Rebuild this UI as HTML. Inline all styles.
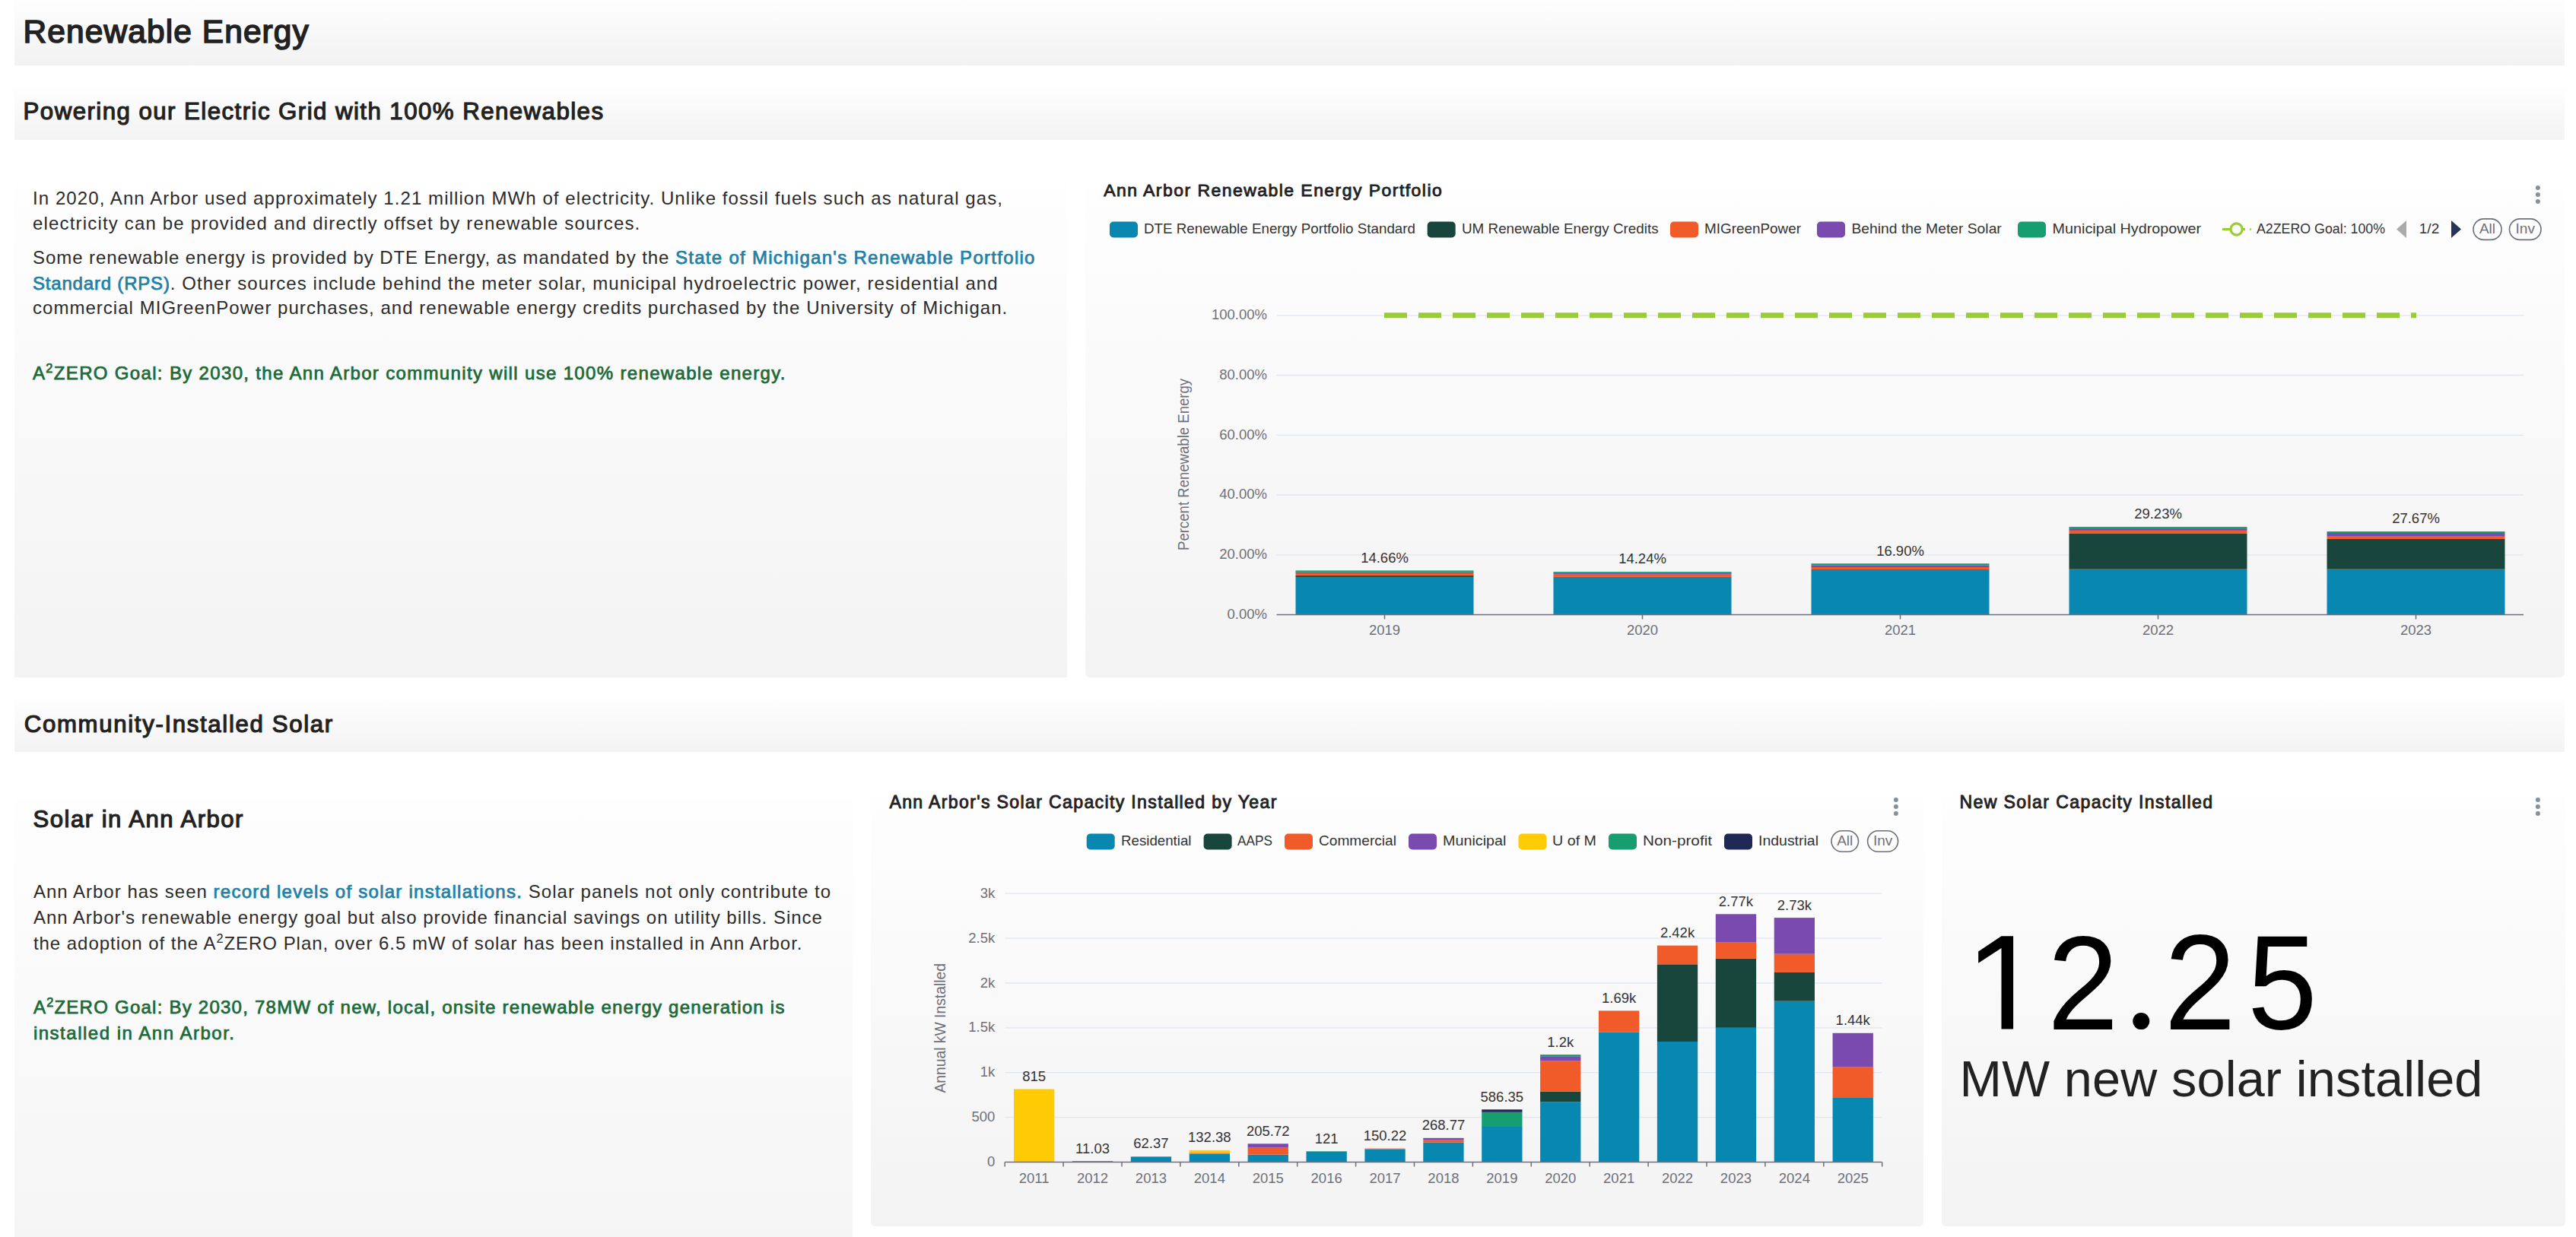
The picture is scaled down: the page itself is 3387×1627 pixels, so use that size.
<!DOCTYPE html><html><head><meta charset="utf-8"><style>
html,body{margin:0;padding:0;}
body{width:3387px;height:1627px;overflow:hidden;position:relative;background:#fff;font-family:"Liberation Sans", sans-serif;}
.t{position:absolute;white-space:nowrap;line-height:1;}
.p{position:absolute;}
svg{position:absolute;left:0;top:0;}
sup{font-size:0.68em;vertical-align:0;position:relative;top:-0.55em;line-height:0;}
</style></head><body>
<div class="p" style="left:19px;top:0px;width:3353px;height:86px;background:linear-gradient(to bottom,#fefefe,#f2f2f2 100%);border-radius:0px"></div>
<div class="p" style="left:19px;top:114px;width:3353px;height:70px;background:linear-gradient(to bottom,#fefefe,#f3f3f3 100%);border-radius:0px"></div>
<div class="p" style="left:19px;top:243px;width:1384px;height:648px;background:linear-gradient(to bottom,#fefefe,#f3f3f3 100%);border-radius:0px"></div>
<div class="p" style="left:1427px;top:243px;width:1945px;height:648px;background:linear-gradient(to bottom,#fefefe,#f3f3f3 100%);border-radius:6px"></div>
<div class="p" style="left:19px;top:919px;width:3353px;height:70px;background:linear-gradient(to bottom,#fefefe,#f3f3f3 100%);border-radius:0px"></div>
<div class="p" style="left:19px;top:1050px;width:1102px;height:650px;background:linear-gradient(to bottom,#fefefe,#f4f4f4 100%);border-radius:0px"></div>
<div class="p" style="left:1145px;top:1043px;width:1384px;height:570px;background:linear-gradient(to bottom,#fefefe,#f3f3f3 100%);border-radius:6px"></div>
<div class="p" style="left:2553px;top:1043px;width:820px;height:570px;background:linear-gradient(to bottom,#fefefe,#f3f3f3 100%);border-radius:6px"></div>
<div class="t" style="left:30.6px;top:20.8px;font-size:42.44px;font-weight:400;color:#222;letter-spacing:1.107px;-webkit-text-stroke:1.61px #222;">Renewable Energy</div>
<div class="t" style="left:30.6px;top:131.2px;font-size:31.25px;font-weight:400;color:#222;letter-spacing:1.433px;-webkit-text-stroke:1.19px #222;">Powering our Electric Grid with 100% Renewables</div>
<div class="t" style="left:31.8px;top:937.4px;font-size:31.18px;font-weight:400;color:#222;letter-spacing:1.662px;-webkit-text-stroke:1.18px #222;">Community-Installed Solar</div>
<div class="t" style="left:43.0px;top:248.8px;font-size:24px;font-weight:400;color:#2b2b2b;letter-spacing:1.08px;">In 2020, Ann Arbor used approximately 1.21 million MWh of electricity. Unlike fossil fuels such as natural gas,</div>
<div class="t" style="left:43.0px;top:281.7px;font-size:24px;font-weight:400;color:#2b2b2b;letter-spacing:1.171px;">electricity can be provided and directly offset by renewable sources.</div>
<div class="t" style="left:43.0px;top:327.4px;font-size:24px;font-weight:400;color:#2b2b2b;letter-spacing:0.936px;">Some renewable energy is provided by DTE Energy, as mandated by the <b style="font-weight:400;-webkit-text-stroke:0.75px #1f80a8;color:#1f80a8;letter-spacing:1.290px">State of Michigan's Renewable Portfolio</b></div>
<div class="t" style="left:43.0px;top:360.8px;font-size:24px;font-weight:400;color:#2b2b2b;letter-spacing:1.068px;"><b style="font-weight:400;-webkit-text-stroke:0.75px #1f80a8;color:#1f80a8;letter-spacing:0.807px">Standard (RPS)</b>. Other sources include behind the meter solar, municipal hydroelectric power, residential and</div>
<div class="t" style="left:43.0px;top:393.4px;font-size:24px;font-weight:400;color:#2b2b2b;letter-spacing:1.029px;">commercial MIGreenPower purchases, and renewable energy credits purchased by the University of Michigan.</div>
<div class="t" style="left:43.0px;top:478.9px;font-size:24px;font-weight:400;color:#1c6a3a;letter-spacing:1.339px;-webkit-text-stroke:0.75px #1c6a3a;">A<sup>2</sup>ZERO Goal: By 2030, the Ann Arbor community will use 100% renewable energy.</div>
<div class="t" style="left:43.6px;top:1062.3px;font-size:31.1px;font-weight:400;color:#222;letter-spacing:1.482px;-webkit-text-stroke:1.18px #222;">Solar in Ann Arbor</div>
<div class="t" style="left:43.9px;top:1160.9px;font-size:24px;font-weight:400;color:#2b2b2b;letter-spacing:1.01px;">Ann Arbor has seen <b style="font-weight:400;-webkit-text-stroke:0.75px #1f80a8;color:#1f80a8;letter-spacing:1.254px">record levels of solar installations.</b> Solar panels not only contribute to</div>
<div class="t" style="left:43.9px;top:1195.0px;font-size:24px;font-weight:400;color:#2b2b2b;letter-spacing:0.98px;">Ann Arbor's renewable energy goal but also provide financial savings on utility bills. Since</div>
<div class="t" style="left:43.9px;top:1228.8px;font-size:24px;font-weight:400;color:#2b2b2b;letter-spacing:0.968px;">the adoption of the A<sup>2</sup>ZERO Plan, over 6.5 mW of solar has been installed in Ann Arbor.</div>
<div class="t" style="left:43.9px;top:1312.5px;font-size:24px;font-weight:400;color:#1c6a3a;letter-spacing:1.239px;-webkit-text-stroke:0.75px #1c6a3a;">A<sup>2</sup>ZERO Goal: By 2030, 78MW of new, local, onsite renewable energy generation is</div>
<div class="t" style="left:43.9px;top:1346.5px;font-size:24px;font-weight:400;color:#1c6a3a;letter-spacing:1.512px;-webkit-text-stroke:0.75px #1c6a3a;">installed in Ann Arbor.</div>
<div class="t" style="left:1451.2px;top:239.3px;font-size:22.97px;font-weight:400;color:#222;letter-spacing:1.466px;-webkit-text-stroke:0.87px #222;">Ann Arbor Renewable Energy Portfolio</div>
<div class="t" style="left:1169.4px;top:1044.1px;font-size:23.11px;font-weight:400;color:#222;letter-spacing:1.337px;-webkit-text-stroke:0.88px #222;">Ann Arbor&#39;s Solar Capacity Installed by Year</div>
<div class="t" style="left:2576.4px;top:1044.4px;font-size:23.11px;font-weight:400;color:#222;letter-spacing:1.378px;-webkit-text-stroke:0.88px #222;">New Solar Capacity Installed</div>
<div class="t" style="left:2576.5px;top:1386.4px;font-size:66.6px;font-weight:400;color:#222;letter-spacing:0.152px;">MW new solar installed</div>
<svg width="3387" height="1627" viewBox="0 0 3387 1627" font-family='"Liberation Sans", sans-serif'>
<circle cx="3336.9" cy="246.9" r="3.0" fill="#84919a"/>
<circle cx="3336.9" cy="255.9" r="3.0" fill="#84919a"/>
<circle cx="3336.9" cy="264.9" r="3.0" fill="#84919a"/>
<rect x="1459" y="291.5" width="37" height="21" rx="5" fill="#0888b0"/>
<text x="1504" y="307.1" font-size="19" fill="#333" textLength="357" lengthAdjust="spacingAndGlyphs">DTE Renewable Energy Portfolio Standard</text>
<rect x="1876.7" y="291.5" width="37" height="21" rx="5" fill="#19463c"/>
<text x="1922" y="307.1" font-size="19" fill="#333" textLength="258.6" lengthAdjust="spacingAndGlyphs">UM Renewable Energy Credits</text>
<rect x="2196" y="291.5" width="37" height="21" rx="5" fill="#f15a29"/>
<text x="2241" y="307.1" font-size="19" fill="#333" textLength="127" lengthAdjust="spacingAndGlyphs">MIGreenPower</text>
<rect x="2389" y="291.5" width="37" height="21" rx="5" fill="#7a4aae"/>
<text x="2434.5" y="307.1" font-size="19" fill="#333" textLength="197.3" lengthAdjust="spacingAndGlyphs">Behind the Meter Solar</text>
<rect x="2653" y="291.5" width="37" height="21" rx="5" fill="#179e70"/>
<text x="2698.6" y="307.1" font-size="19" fill="#333" textLength="195.4" lengthAdjust="spacingAndGlyphs">Municipal Hydropower</text>
<line x1="2922" y1="301.5" x2="2952" y2="301.5" stroke="#9acd32" stroke-width="3"/>
<circle cx="2940.6" cy="301.5" r="7.6" fill="#fafafa" stroke="#9acd32" stroke-width="3.2"/>
<circle cx="2959" cy="301.5" r="1.2" fill="#9acd32"/>
<text x="2967" y="307.1" font-size="19" fill="#333" textLength="169" lengthAdjust="spacingAndGlyphs">A2ZERO Goal: 100%</text>
<path d="M3164 290 L3151 301.5 L3164 313 Z" fill="#aaa"/>
<text x="3194.00" y="307.10" font-size="19" fill="#333" text-anchor="middle" >1/2</text>
<path d="M3223 290 L3236 301.5 L3223 313 Z" fill="#26345a"/>
<rect x="3252" y="287.9" width="37" height="27.5" rx="13.75" fill="none" stroke="#6e7079" stroke-width="1.6"/>
<text x="3270.50" y="307.20" font-size="19" fill="#6e7079" text-anchor="middle" >All</text>
<rect x="3299.5" y="287.9" width="41.5" height="27.5" rx="13.75" fill="none" stroke="#6e7079" stroke-width="1.6"/>
<text x="3320.25" y="307.20" font-size="19" fill="#6e7079" text-anchor="middle" >Inv</text>
<line x1="1678.5" y1="729.8" x2="3318" y2="729.8" stroke="#e0e6f1" stroke-width="1.3"/>
<line x1="1678.5" y1="651.0" x2="3318" y2="651.0" stroke="#e0e6f1" stroke-width="1.3"/>
<line x1="1678.5" y1="572.3" x2="3318" y2="572.3" stroke="#e0e6f1" stroke-width="1.3"/>
<line x1="1678.5" y1="493.5" x2="3318" y2="493.5" stroke="#e0e6f1" stroke-width="1.3"/>
<line x1="1678.5" y1="414.8" x2="3318" y2="414.8" stroke="#e0e6f1" stroke-width="1.3"/>
<text x="1666.00" y="813.90" font-size="18.5" fill="#6e7079" text-anchor="end" >0.00%</text>
<text x="1666.00" y="735.16" font-size="18.5" fill="#6e7079" text-anchor="end" >20.00%</text>
<text x="1666.00" y="656.42" font-size="18.5" fill="#6e7079" text-anchor="end" >40.00%</text>
<text x="1666.00" y="577.68" font-size="18.5" fill="#6e7079" text-anchor="end" >60.00%</text>
<text x="1666.00" y="498.94" font-size="18.5" fill="#6e7079" text-anchor="end" >80.00%</text>
<text x="1666.00" y="420.20" font-size="18.5" fill="#6e7079" text-anchor="end" >100.00%</text>
<text x="1563.2" y="610.9" font-size="19.5" fill="#6e7079" text-anchor="middle" textLength="226" lengthAdjust="spacingAndGlyphs" transform="rotate(-90 1563.2 610.9)">Percent Renewable Energy</text>
<line x1="1820" y1="414.7" x2="3177" y2="414.7" stroke="#9acd32" stroke-width="7" stroke-dasharray="30 15"/>
<rect x="1703.50" y="758.90" width="234.00" height="49.60" fill="#0888b0"/>
<rect x="1703.50" y="756.80" width="234.00" height="2.10" fill="#19463c"/>
<rect x="1703.50" y="754.00" width="234.00" height="2.80" fill="#f15a29"/>
<rect x="1703.50" y="752.50" width="234.00" height="1.50" fill="#7a4aae"/>
<rect x="1703.50" y="750.40" width="234.00" height="2.10" fill="#179e70"/>
<text x="1820.50" y="739.80" font-size="18.5" fill="#333" text-anchor="middle" >14.66%</text>
<line x1="1820.5" y1="808.5" x2="1820.5" y2="814.5" stroke="#6e7079" stroke-width="1.5"/>
<text x="1820.50" y="834.50" font-size="18.5" fill="#6e7079" text-anchor="middle" >2019</text>
<rect x="2042.50" y="758.90" width="234.00" height="49.60" fill="#0888b0"/>
<rect x="2042.50" y="755.70" width="234.00" height="3.20" fill="#f15a29"/>
<rect x="2042.50" y="753.80" width="234.00" height="1.90" fill="#7a4aae"/>
<rect x="2042.50" y="752.00" width="234.00" height="1.80" fill="#179e70"/>
<text x="2159.50" y="741.00" font-size="18.5" fill="#333" text-anchor="middle" >14.24%</text>
<line x1="2159.5" y1="808.5" x2="2159.5" y2="814.5" stroke="#6e7079" stroke-width="1.5"/>
<text x="2159.50" y="834.50" font-size="18.5" fill="#6e7079" text-anchor="middle" >2020</text>
<rect x="2381.50" y="749.00" width="234.00" height="59.50" fill="#0888b0"/>
<rect x="2381.50" y="746.00" width="234.00" height="3.00" fill="#f15a29"/>
<rect x="2381.50" y="743.80" width="234.00" height="2.20" fill="#7a4aae"/>
<rect x="2381.50" y="741.20" width="234.00" height="2.60" fill="#179e70"/>
<text x="2498.50" y="730.70" font-size="18.5" fill="#333" text-anchor="middle" >16.90%</text>
<line x1="2498.5" y1="808.5" x2="2498.5" y2="814.5" stroke="#6e7079" stroke-width="1.5"/>
<text x="2498.50" y="834.50" font-size="18.5" fill="#6e7079" text-anchor="middle" >2021</text>
<rect x="2720.50" y="748.70" width="234.00" height="59.80" fill="#0888b0"/>
<rect x="2720.50" y="702.00" width="234.00" height="46.70" fill="#19463c"/>
<rect x="2720.50" y="697.90" width="234.00" height="4.10" fill="#f15a29"/>
<rect x="2720.50" y="694.90" width="234.00" height="3.00" fill="#7a4aae"/>
<rect x="2720.50" y="692.90" width="234.00" height="2.00" fill="#179e70"/>
<text x="2837.50" y="681.80" font-size="18.5" fill="#333" text-anchor="middle" >29.23%</text>
<line x1="2837.5" y1="808.5" x2="2837.5" y2="814.5" stroke="#6e7079" stroke-width="1.5"/>
<text x="2837.50" y="834.50" font-size="18.5" fill="#6e7079" text-anchor="middle" >2022</text>
<rect x="3059.50" y="748.70" width="234.00" height="59.80" fill="#0888b0"/>
<rect x="3059.50" y="709.00" width="234.00" height="39.70" fill="#19463c"/>
<rect x="3059.50" y="705.00" width="234.00" height="4.00" fill="#f15a29"/>
<rect x="3059.50" y="701.00" width="234.00" height="4.00" fill="#7a4aae"/>
<rect x="3059.50" y="699.00" width="234.00" height="2.00" fill="#179e70"/>
<text x="3176.50" y="687.70" font-size="18.5" fill="#333" text-anchor="middle" >27.67%</text>
<line x1="3176.5" y1="808.5" x2="3176.5" y2="814.5" stroke="#6e7079" stroke-width="1.5"/>
<text x="3176.50" y="834.50" font-size="18.5" fill="#6e7079" text-anchor="middle" >2023</text>
<line x1="1678.5" y1="808.5" x2="3318" y2="808.5" stroke="#6e7079" stroke-width="1.6"/>
<circle cx="2492.9" cy="1051.9" r="3.0" fill="#84919a"/>
<circle cx="2492.9" cy="1060.9" r="3.0" fill="#84919a"/>
<circle cx="2492.9" cy="1069.9" r="3.0" fill="#84919a"/>
<rect x="1428.7" y="1096.5" width="37" height="21" rx="5" fill="#0888b0"/>
<text x="1474" y="1112.1" font-size="19" fill="#333" textLength="92.5" lengthAdjust="spacingAndGlyphs">Residential</text>
<rect x="1582.6" y="1096.5" width="37" height="21" rx="5" fill="#19463c"/>
<text x="1627" y="1112.1" font-size="19" fill="#333" textLength="46" lengthAdjust="spacingAndGlyphs">AAPS</text>
<rect x="1689" y="1096.5" width="37" height="21" rx="5" fill="#f15a29"/>
<text x="1734" y="1112.1" font-size="19" fill="#333" textLength="102" lengthAdjust="spacingAndGlyphs">Commercial</text>
<rect x="1852" y="1096.5" width="37" height="21" rx="5" fill="#7a4aae"/>
<text x="1897" y="1112.1" font-size="19" fill="#333" textLength="83.4" lengthAdjust="spacingAndGlyphs">Municipal</text>
<rect x="1996.5" y="1096.5" width="37" height="21" rx="5" fill="#ffcb05"/>
<text x="2041" y="1112.1" font-size="19" fill="#333" textLength="58" lengthAdjust="spacingAndGlyphs">U of M</text>
<rect x="2115" y="1096.5" width="37" height="21" rx="5" fill="#179e70"/>
<text x="2160" y="1112.1" font-size="19" fill="#333" textLength="91" lengthAdjust="spacingAndGlyphs">Non-profit</text>
<rect x="2267" y="1096.5" width="37" height="21" rx="5" fill="#1e2a55"/>
<text x="2312" y="1112.1" font-size="19" fill="#333" textLength="79" lengthAdjust="spacingAndGlyphs">Industrial</text>
<rect x="2408" y="1092.8" width="35.5" height="27.5" rx="13.75" fill="none" stroke="#6e7079" stroke-width="1.6"/>
<text x="2425.75" y="1112.00" font-size="19" fill="#6e7079" text-anchor="middle" >All</text>
<rect x="2455.6" y="1092.8" width="40.0" height="27.5" rx="13.75" fill="none" stroke="#6e7079" stroke-width="1.6"/>
<text x="2475.60" y="1112.00" font-size="19" fill="#6e7079" text-anchor="middle" >Inv</text>
<line x1="1321.2" y1="1469.6" x2="2474.5" y2="1469.6" stroke="#e0e6f1" stroke-width="1.3"/>
<line x1="1321.2" y1="1410.7" x2="2474.5" y2="1410.7" stroke="#e0e6f1" stroke-width="1.3"/>
<line x1="1321.2" y1="1351.8" x2="2474.5" y2="1351.8" stroke="#e0e6f1" stroke-width="1.3"/>
<line x1="1321.2" y1="1293.0" x2="2474.5" y2="1293.0" stroke="#e0e6f1" stroke-width="1.3"/>
<line x1="1321.2" y1="1234.1" x2="2474.5" y2="1234.1" stroke="#e0e6f1" stroke-width="1.3"/>
<line x1="1321.2" y1="1175.2" x2="2474.5" y2="1175.2" stroke="#e0e6f1" stroke-width="1.3"/>
<text x="1308.30" y="1534.10" font-size="18.5" fill="#6e7079" text-anchor="end" >0</text>
<text x="1308.30" y="1475.22" font-size="18.5" fill="#6e7079" text-anchor="end" >500</text>
<text x="1308.30" y="1416.33" font-size="18.5" fill="#6e7079" text-anchor="end" >1k</text>
<text x="1308.30" y="1357.45" font-size="18.5" fill="#6e7079" text-anchor="end" >1.5k</text>
<text x="1308.30" y="1298.57" font-size="18.5" fill="#6e7079" text-anchor="end" >2k</text>
<text x="1308.30" y="1239.68" font-size="18.5" fill="#6e7079" text-anchor="end" >2.5k</text>
<text x="1308.30" y="1180.80" font-size="18.5" fill="#6e7079" text-anchor="end" >3k</text>
<text x="1243.2" y="1352.3" font-size="19.5" fill="#6e7079" text-anchor="middle" textLength="170.6" lengthAdjust="spacingAndGlyphs" transform="rotate(-90 1243.2 1352.3)">Annual kW Installed</text>
<rect x="1333.00" y="1432.50" width="53.30" height="96.00" fill="#ffcb05"/>
<text x="1359.65" y="1421.90" font-size="18.5" fill="#333" text-anchor="middle" >815</text>
<text x="1359.65" y="1556.00" font-size="18.5" fill="#6e7079" text-anchor="middle" >2011</text>
<rect x="1409.90" y="1527.20" width="53.30" height="1.30" fill="#0888b0"/>
<text x="1436.55" y="1516.60" font-size="18.5" fill="#333" text-anchor="middle" >11.03</text>
<text x="1436.55" y="1556.00" font-size="18.5" fill="#6e7079" text-anchor="middle" >2012</text>
<rect x="1486.80" y="1521.40" width="53.30" height="7.10" fill="#0888b0"/>
<rect x="1486.80" y="1521.00" width="53.30" height="0.40" fill="#f15a29"/>
<text x="1513.45" y="1510.40" font-size="18.5" fill="#333" text-anchor="middle" >62.37</text>
<text x="1513.45" y="1556.00" font-size="18.5" fill="#6e7079" text-anchor="middle" >2013</text>
<rect x="1563.70" y="1517.60" width="53.30" height="10.90" fill="#0888b0"/>
<rect x="1563.70" y="1516.30" width="53.30" height="1.30" fill="#f15a29"/>
<rect x="1563.70" y="1512.80" width="53.30" height="3.50" fill="#ffcb05"/>
<text x="1590.35" y="1502.20" font-size="18.5" fill="#333" text-anchor="middle" >132.38</text>
<text x="1590.35" y="1556.00" font-size="18.5" fill="#6e7079" text-anchor="middle" >2014</text>
<rect x="1640.60" y="1518.60" width="53.30" height="9.90" fill="#0888b0"/>
<rect x="1640.60" y="1509.60" width="53.30" height="9.00" fill="#f15a29"/>
<rect x="1640.60" y="1504.30" width="53.30" height="5.30" fill="#7a4aae"/>
<text x="1667.25" y="1493.70" font-size="18.5" fill="#333" text-anchor="middle" >205.72</text>
<text x="1667.25" y="1556.00" font-size="18.5" fill="#6e7079" text-anchor="middle" >2015</text>
<rect x="1717.50" y="1514.60" width="53.30" height="13.90" fill="#0888b0"/>
<rect x="1717.50" y="1514.10" width="53.30" height="0.50" fill="#179e70"/>
<text x="1744.15" y="1503.50" font-size="18.5" fill="#333" text-anchor="middle" >121</text>
<text x="1744.15" y="1556.00" font-size="18.5" fill="#6e7079" text-anchor="middle" >2016</text>
<rect x="1794.40" y="1511.60" width="53.30" height="16.90" fill="#0888b0"/>
<rect x="1794.40" y="1510.60" width="53.30" height="1.00" fill="#f15a29"/>
<text x="1821.05" y="1500.00" font-size="18.5" fill="#333" text-anchor="middle" >150.22</text>
<text x="1821.05" y="1556.00" font-size="18.5" fill="#6e7079" text-anchor="middle" >2017</text>
<rect x="1871.30" y="1502.50" width="53.30" height="26.00" fill="#0888b0"/>
<rect x="1871.30" y="1499.60" width="53.30" height="2.90" fill="#f15a29"/>
<rect x="1871.30" y="1496.80" width="53.30" height="2.80" fill="#7a4aae"/>
<text x="1897.95" y="1486.20" font-size="18.5" fill="#333" text-anchor="middle" >268.77</text>
<text x="1897.95" y="1556.00" font-size="18.5" fill="#6e7079" text-anchor="middle" >2018</text>
<rect x="1948.20" y="1482.00" width="53.30" height="46.50" fill="#0888b0"/>
<rect x="1948.20" y="1462.80" width="53.30" height="19.20" fill="#179e70"/>
<rect x="1948.20" y="1459.30" width="53.30" height="3.50" fill="#1e2a55"/>
<text x="1974.85" y="1448.70" font-size="18.5" fill="#333" text-anchor="middle" >586.35</text>
<text x="1974.85" y="1556.00" font-size="18.5" fill="#6e7079" text-anchor="middle" >2019</text>
<rect x="2025.10" y="1449.20" width="53.30" height="79.30" fill="#0888b0"/>
<rect x="2025.10" y="1435.60" width="53.30" height="13.60" fill="#19463c"/>
<rect x="2025.10" y="1395.20" width="53.30" height="40.40" fill="#f15a29"/>
<rect x="2025.10" y="1389.20" width="53.30" height="6.00" fill="#7a4aae"/>
<rect x="2025.10" y="1387.10" width="53.30" height="2.10" fill="#179e70"/>
<text x="2051.75" y="1376.50" font-size="18.5" fill="#333" text-anchor="middle" >1.2k</text>
<text x="2051.75" y="1556.00" font-size="18.5" fill="#6e7079" text-anchor="middle" >2020</text>
<rect x="2102.00" y="1357.40" width="53.30" height="171.10" fill="#0888b0"/>
<rect x="2102.00" y="1329.40" width="53.30" height="28.00" fill="#f15a29"/>
<text x="2128.65" y="1318.80" font-size="18.5" fill="#333" text-anchor="middle" >1.69k</text>
<text x="2128.65" y="1556.00" font-size="18.5" fill="#6e7079" text-anchor="middle" >2021</text>
<rect x="2178.90" y="1370.00" width="53.30" height="158.50" fill="#0888b0"/>
<rect x="2178.90" y="1268.30" width="53.30" height="101.70" fill="#19463c"/>
<rect x="2178.90" y="1243.60" width="53.30" height="24.70" fill="#f15a29"/>
<text x="2205.55" y="1233.00" font-size="18.5" fill="#333" text-anchor="middle" >2.42k</text>
<text x="2205.55" y="1556.00" font-size="18.5" fill="#6e7079" text-anchor="middle" >2022</text>
<rect x="2255.80" y="1351.80" width="53.30" height="176.70" fill="#0888b0"/>
<rect x="2255.80" y="1260.70" width="53.30" height="91.10" fill="#19463c"/>
<rect x="2255.80" y="1239.10" width="53.30" height="21.60" fill="#f15a29"/>
<rect x="2255.80" y="1202.30" width="53.30" height="36.80" fill="#7a4aae"/>
<text x="2282.45" y="1191.70" font-size="18.5" fill="#333" text-anchor="middle" >2.77k</text>
<text x="2282.45" y="1556.00" font-size="18.5" fill="#6e7079" text-anchor="middle" >2023</text>
<rect x="2332.70" y="1316.70" width="53.30" height="211.80" fill="#0888b0"/>
<rect x="2332.70" y="1278.90" width="53.30" height="37.80" fill="#19463c"/>
<rect x="2332.70" y="1254.70" width="53.30" height="24.20" fill="#f15a29"/>
<rect x="2332.70" y="1207.10" width="53.30" height="47.60" fill="#7a4aae"/>
<text x="2359.35" y="1196.50" font-size="18.5" fill="#333" text-anchor="middle" >2.73k</text>
<text x="2359.35" y="1556.00" font-size="18.5" fill="#6e7079" text-anchor="middle" >2024</text>
<rect x="2409.60" y="1443.20" width="53.30" height="85.30" fill="#0888b0"/>
<rect x="2409.60" y="1403.10" width="53.30" height="40.10" fill="#f15a29"/>
<rect x="2409.60" y="1358.80" width="53.30" height="44.30" fill="#7a4aae"/>
<text x="2436.25" y="1348.20" font-size="18.5" fill="#333" text-anchor="middle" >1.44k</text>
<text x="2436.25" y="1556.00" font-size="18.5" fill="#6e7079" text-anchor="middle" >2025</text>
<line x1="1321.2" y1="1528.5" x2="1321.2" y2="1534.5" stroke="#6e7079" stroke-width="1.5"/>
<line x1="1398.1" y1="1528.5" x2="1398.1" y2="1534.5" stroke="#6e7079" stroke-width="1.5"/>
<line x1="1475.0" y1="1528.5" x2="1475.0" y2="1534.5" stroke="#6e7079" stroke-width="1.5"/>
<line x1="1551.9" y1="1528.5" x2="1551.9" y2="1534.5" stroke="#6e7079" stroke-width="1.5"/>
<line x1="1628.8" y1="1528.5" x2="1628.8" y2="1534.5" stroke="#6e7079" stroke-width="1.5"/>
<line x1="1705.7" y1="1528.5" x2="1705.7" y2="1534.5" stroke="#6e7079" stroke-width="1.5"/>
<line x1="1782.6" y1="1528.5" x2="1782.6" y2="1534.5" stroke="#6e7079" stroke-width="1.5"/>
<line x1="1859.5" y1="1528.5" x2="1859.5" y2="1534.5" stroke="#6e7079" stroke-width="1.5"/>
<line x1="1936.4" y1="1528.5" x2="1936.4" y2="1534.5" stroke="#6e7079" stroke-width="1.5"/>
<line x1="2013.3" y1="1528.5" x2="2013.3" y2="1534.5" stroke="#6e7079" stroke-width="1.5"/>
<line x1="2090.2" y1="1528.5" x2="2090.2" y2="1534.5" stroke="#6e7079" stroke-width="1.5"/>
<line x1="2167.1" y1="1528.5" x2="2167.1" y2="1534.5" stroke="#6e7079" stroke-width="1.5"/>
<line x1="2244.0" y1="1528.5" x2="2244.0" y2="1534.5" stroke="#6e7079" stroke-width="1.5"/>
<line x1="2320.9" y1="1528.5" x2="2320.9" y2="1534.5" stroke="#6e7079" stroke-width="1.5"/>
<line x1="2397.8" y1="1528.5" x2="2397.8" y2="1534.5" stroke="#6e7079" stroke-width="1.5"/>
<line x1="2474.7" y1="1528.5" x2="2474.7" y2="1534.5" stroke="#6e7079" stroke-width="1.5"/>
<line x1="1321.2" y1="1528.5" x2="2474.5" y2="1528.5" stroke="#6e7079" stroke-width="1.6"/>
<circle cx="3336.9" cy="1051.9" r="3.0" fill="#84919a"/>
<circle cx="3336.9" cy="1060.9" r="3.0" fill="#84919a"/>
<circle cx="3336.9" cy="1069.9" r="3.0" fill="#84919a"/>
<polygon points="2601.2,1251.6 2631.5,1231.2 2647.1,1231.2 2647.1,1353.5 2631.5,1353.5 2631.5,1247.0 2601.2,1266.8" fill="#000"/>
<text x="0" y="0" font-size="177.2" fill="#000" transform="translate(2691.9,1353.5) scale(0.949,1)">2</text>
<circle cx="2815.25" cy="1343.1" r="11" fill="#000"/>
<text x="0" y="0" font-size="177.2" fill="#000" transform="translate(2845.4,1353.5) scale(0.958,1)">2</text>
<text x="0" y="0" font-size="175.8" fill="#000" transform="translate(2955.0,1352.7) scale(0.939,1)">5</text>
</svg>
</body></html>
